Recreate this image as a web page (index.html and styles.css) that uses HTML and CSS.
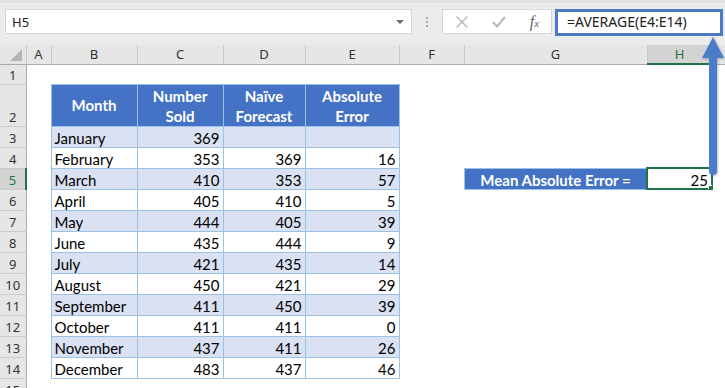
FILE: index.html
```html
<!DOCTYPE html>
<html lang="en">
<head>
    <meta charset="UTF-8">
    <title>Mean Absolute Error</title>
    <link rel="stylesheet" href="styles.css">
</head>
<body>
<div class="app">
    <div class="formula-bar">
        <div class="name-box">H5<span class="drop"></span></div>
        <div class="grip"><span></span></div>
        <div class="fx-box">
            <svg width="14" height="14" viewBox="0 0 14 14"><path d="M1.5 1.5 L12.5 12.5 M12.5 1.5 L1.5 12.5" stroke="#b8b8b8" stroke-width="1.5" fill="none"/></svg>
            <svg width="14" height="12" viewBox="0 0 14 12"><path d="M1 6 L5 10.5 L13 1" stroke="#b8b8b8" stroke-width="2" fill="none"/></svg>
            <span class="fx">f<span class="x">x</span></span>
        </div>
        <div class="formula">=AVERAGE(E4:E14)</div>
    </div>

    <table class="sheet">
        <colgroup>
            <col style="width: 26px">
            <col style="width: 25px">
            <col style="width: 86px">
            <col style="width: 86px">
            <col style="width: 82px">
            <col style="width: 94px">
            <col style="width: 65px">
            <col style="width: 183px">
            <col style="width: 65px">
            <col style="width: 13px">
        </colgroup>
        <tr class="cols">
            <th class="corner"><span class="tri"></span></th>
            <th>A</th><th>B</th><th>C</th><th>D</th><th>E</th><th>F</th><th>G</th><th class="on">H</th><th></th>
        </tr>
        <tr class="r1">
            <th class="rh">1</th><td></td><td></td><td></td><td></td><td></td><td></td><td></td><td></td><td></td>
        </tr>
        <tr class="r2">
            <th class="rh">2</th><td></td>
            <td class="hd mid">Month</td>
            <td class="hd">Number<br>Sold</td>
            <td class="hd">Naïve<br>Forecast</td>
            <td class="hd">Absolute<br>Error</td>
            <td></td><td></td><td></td><td></td>
        </tr>
        <tr class="band">
            <th class="rh">3</th><td></td>
            <td class="t">January</td><td class="t n">369</td><td class="t n"></td><td class="t n"></td>
            <td></td><td></td><td></td><td></td>
        </tr>
        <tr>
            <th class="rh">4</th><td></td>
            <td class="t">February</td><td class="t n">353</td><td class="t n">369</td><td class="t n">16</td>
            <td></td><td></td><td></td><td></td>
        </tr>
        <tr class="band">
            <th class="rh on">5</th><td></td>
            <td class="t">March</td><td class="t n">410</td><td class="t n">353</td><td class="t n">57</td>
            <td></td><td class="label">Mean Absolute Error =</td><td class="sel">25</td><td></td>
        </tr>
        <tr>
            <th class="rh">6</th><td></td>
            <td class="t">April</td><td class="t n">405</td><td class="t n">410</td><td class="t n">5</td>
            <td></td><td></td><td></td><td></td>
        </tr>
        <tr class="band">
            <th class="rh">7</th><td></td>
            <td class="t">May</td><td class="t n">444</td><td class="t n">405</td><td class="t n">39</td>
            <td></td><td></td><td></td><td></td>
        </tr>
        <tr>
            <th class="rh">8</th><td></td>
            <td class="t">June</td><td class="t n">435</td><td class="t n">444</td><td class="t n">9</td>
            <td></td><td></td><td></td><td></td>
        </tr>
        <tr class="band">
            <th class="rh">9</th><td></td>
            <td class="t">July</td><td class="t n">421</td><td class="t n">435</td><td class="t n">14</td>
            <td></td><td></td><td></td><td></td>
        </tr>
        <tr>
            <th class="rh">10</th><td></td>
            <td class="t">August</td><td class="t n">450</td><td class="t n">421</td><td class="t n">29</td>
            <td></td><td></td><td></td><td></td>
        </tr>
        <tr class="band">
            <th class="rh">11</th><td></td>
            <td class="t">September</td><td class="t n">411</td><td class="t n">450</td><td class="t n">39</td>
            <td></td><td></td><td></td><td></td>
        </tr>
        <tr>
            <th class="rh">12</th><td></td>
            <td class="t">October</td><td class="t n">411</td><td class="t n">411</td><td class="t n">0</td>
            <td></td><td></td><td></td><td></td>
        </tr>
        <tr class="band">
            <th class="rh">13</th><td></td>
            <td class="t">November</td><td class="t n">437</td><td class="t n">411</td><td class="t n">26</td>
            <td></td><td></td><td></td><td></td>
        </tr>
        <tr>
            <th class="rh">14</th><td></td>
            <td class="t">December</td><td class="t n">483</td><td class="t n">437</td><td class="t n">46</td>
            <td></td><td></td><td></td><td></td>
        </tr>
        <tr>
            <th class="rh">15</th><td></td><td></td><td></td><td></td><td></td><td></td><td></td><td></td><td></td>
        </tr>
    </table>

    <!-- arrow from H5 up to the formula bar -->
    <svg class="arrow" width="725" height="388" viewBox="0 0 725 388">
        <defs>
            <filter id="soft" x="-50%" y="-10%" width="200%" height="120%">
                <feDropShadow dx="1" dy="1" stdDeviation="1" flood-color="#000" flood-opacity="0.25"/>
            </filter>
        </defs>
        <g filter="url(#soft)" fill="#4a7bc9">
            <rect x="709" y="54" width="8" height="121" rx="4"/>
            <polygon points="702,58 724,58 713,37"/>
        </g>
    </svg>
</div>
</body>
</html>
```

FILE: styles.css
```css
body {
    margin: 0;
    background-color: #fff;
    font-family: Lato, "Liberation Sans", sans-serif;
}
.app {
    position: relative;
    width: 725px;
    height: 388px;
    overflow: hidden;
}

/* formula bar */
.formula-bar {
    display: flex;
    align-items: flex-start;
    height: 45px;
    box-sizing: border-box;
    padding: 6px 0 0 5px;
    background-color: #ececec;
    border-top: 3px solid #e2e2e2;
    font-family: "Noto Sans", sans-serif;
    font-size: 13px;
    color: #222;
}
.name-box {
    display: flex;
    align-items: center;
    justify-content: space-between;
    width: 407px;
    height: 25px;
    box-sizing: border-box;
    padding: 0 7px 0 6px;
    background-color: #fff;
    border: 1px solid #d6d6d6;
}
.drop {
    width: 0;
    height: 0;
    border-left: 4px solid transparent;
    border-right: 4px solid transparent;
    border-top: 4px solid #6a6a6a;
}
.grip {
    display: flex;
    align-items: center;
    justify-content: center;
    width: 30px;
    height: 25px;
}
.grip span {
    height: 10px;
    border-left: 2px dotted #ababab;
}
.fx-box {
    display: flex;
    align-items: center;
    justify-content: space-around;
    width: 110px;
    height: 25px;
    box-sizing: border-box;
    background-color: #fff;
    border: 1px solid #d6d6d6;
}
.fx {
    font-family: "Liberation Serif", serif;
    font-style: italic;
    font-size: 16px;
    color: #666;
}
.fx .x {
    font-size: 11px;
}
.formula {
    margin-left: 3px;
    width: 168px;
    height: 27px;
    box-sizing: border-box;
    padding-left: 9px;
    background-color: #fff;
    border: 3px solid #4a7bc9;
    font-size: 14px;
    line-height: 20px;
}

/* grid */
.sheet {
    table-layout: fixed;
    width: 725px;
    border-collapse: collapse;
    font-size: 15px;
    color: #000;
}
.sheet td,
.sheet th {
    padding: 0;
    overflow: hidden;
    white-space: nowrap;
}
.sheet tr {
    height: 21px;
}
.sheet .cols {
    height: 19px;
}
.sheet .r1 {
    height: 20px;
}
.sheet .r2 {
    height: 42px;
}
.cols th {
    background-color: #e6e6e6;
    border-right: 1px solid #c8c8c8;
    border-bottom: 1px solid #ababab;
    font-family: "Noto Sans", sans-serif;
    font-size: 13px;
    font-weight: normal;
    line-height: 18px;
    color: #333;
}
.cols th.on {
    background-color: #d3d3d3;
    color: #217346;
    border-bottom: 2px solid #217346;
}
.corner {
    position: relative;
}
.tri {
    position: absolute;
    right: 4px;
    bottom: 3px;
    width: 0;
    height: 0;
    border-left: 12px solid transparent;
    border-bottom: 12px solid #b5b5b5;
}
.rh {
    background-color: #e6e6e6;
    border-right: 1px solid #ababab;
    border-bottom: 1px solid #cacaca;
    font-family: "Noto Sans", sans-serif;
    font-size: 13px;
    font-weight: normal;
    color: #333;
    line-height: 18px;
    vertical-align: bottom;
}
.rh.on {
    background-color: #d3d3d3;
    color: #217346;
    border-right: 2px solid #217346;
}

/* data table */
.hd {
    background-color: #4472c4;
    border: 1px solid #9bc2e6;
    color: #fff;
    font-weight: bold;
    text-align: center;
    line-height: 20px;
    vertical-align: bottom;
}
.hd.mid {
    vertical-align: middle;
}
.t {
    border: 1px solid #9bc2e6;
    padding: 0 3px !important;
    line-height: 18px;
    vertical-align: bottom;
}
.t.n {
    text-align: right;
}
.band .t {
    background-color: #d9e1f2;
}
.label {
    background-color: #4472c4;
    border: 1px solid #9bc2e6;
    color: #fff;
    font-weight: bold;
    text-align: center;
    line-height: 18px;
    vertical-align: bottom;
}
.sel {
    position: relative;
    text-align: right;
    padding-right: 4px !important;
    outline: 2px solid #217346;
    outline-offset: -1px;
    line-height: 18px;
    vertical-align: bottom;
}
.sel::after {
    content: "";
    position: absolute;
    right: -3px;
    bottom: -3px;
    width: 5px;
    height: 5px;
    background-color: #217346;
    border: 1px solid #fff;
}

.arrow {
    position: absolute;
    top: 0;
    left: 0;
    pointer-events: none;
}
```
